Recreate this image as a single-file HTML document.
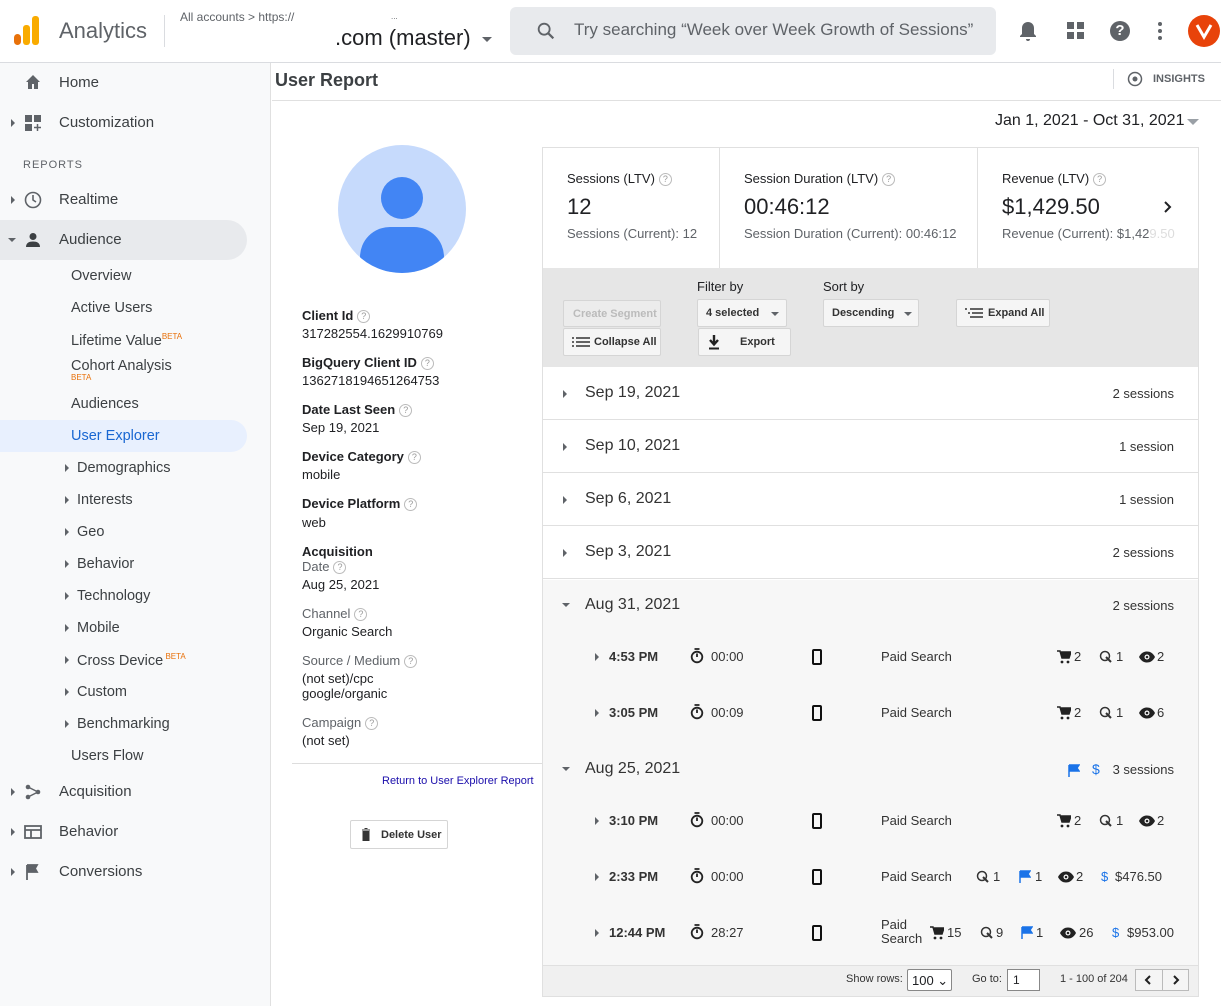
<!DOCTYPE html>
<html><head><meta charset="utf-8"><style>
*{box-sizing:border-box;margin:0;padding:0}
body{width:1221px;height:1006px;overflow:hidden;font-family:"Liberation Sans",Arial,sans-serif;color:#202124;background:#fff;position:relative}
.a{position:absolute;white-space:nowrap}
.nav{font-size:15px;color:#3c4043}
.sub{font-size:14.5px;color:#3c4043}
.tri{position:absolute;width:0;height:0;border-top:4px solid transparent;border-bottom:4px solid transparent;border-left:4px solid #5f6368}
.trid{position:absolute;width:0;height:0;border-left:4px solid transparent;border-right:4px solid transparent;border-top:4px solid #5f6368}
.lbl{font-size:13px;font-weight:bold;color:#202124}
.val{font-size:13px;color:#202124}
.gl{font-size:13px;color:#5f6368}
.q{display:inline-block;width:13px;height:13px;border:1px solid #bbb;border-radius:50%;font-size:9px;color:#999;text-align:center;line-height:11px;vertical-align:middle;margin-left:4px;font-weight:normal}
.btn{position:absolute;background:#f5f5f5;border:1px solid #d5d5d5;border-radius:2px;font-size:11px;font-weight:bold;color:#333}
.row{position:absolute;left:543px;width:655px;height:53px;border-bottom:1px solid #e0e0e0}
.row .d{position:absolute;left:42px;top:17px;font-size:16px;color:#333}
.row .s{position:absolute;right:24px;top:19px;font-size:13px;color:#333}
.sess{position:absolute;left:543px;width:655px;font-size:13px;color:#333}
.sess b{position:absolute;left:66px}
</style></head><body>
<!-- header -->
<div class="a" style="left:0;top:62px;width:1221px;border-top:1px solid #dadce0"></div>
<div class="a" style="left:14px;top:34px;width:7px;height:11px;background:#e8710a;border-radius:4px"></div>
<div class="a" style="left:23px;top:25px;width:7px;height:20px;background:#f9ab00;border-radius:3px"></div>
<div class="a" style="left:32px;top:16px;width:7px;height:29px;background:#f9ab00;border-radius:3px"></div>
<div class="a" style="left:59px;top:18px;font-size:22px;color:#5f6368">Analytics</div>
<div class="a" style="left:164px;top:15px;height:32px;border-left:1px solid #dadce0"></div>
<div class="a" style="left:180px;top:10px;font-size:12px;color:#5f6368">All accounts &gt; https://</div>
<div class="a" style="left:391px;top:12px;font-size:8px;color:#5f6368">...</div>
<div class="a" style="left:335px;top:25px;font-size:22px;color:#202124">.com (master)</div>
<div class="trid" style="left:482px;top:37px;border-width:5px 5px 0 5px"></div>
<div class="a" style="left:510px;top:7px;width:486px;height:48px;background:#e8eaed;border-radius:6px"></div>
<svg class="a" style="left:535px;top:20px" width="22" height="22" viewBox="0 0 24 24"><circle cx="10" cy="10" r="6" fill="none" stroke="#5f6368" stroke-width="2"/><path d="M14.5 14.5L20 20" stroke="#5f6368" stroke-width="2.4"/></svg>
<div class="a" style="left:574px;top:20px;font-size:17px;color:#5f6368">Try searching “Week over Week Growth of Sessions”</div>
<svg class="a" style="left:1018px;top:20px" width="20" height="22" viewBox="0 0 20 22"><path d="M10 2c-3.5 0-6 2.6-6 6v6l-2 2v1h16v-1l-2-2V8c0-3.4-2.5-6-6-6zM8 19h4a2 2 0 01-4 0z" fill="#5f6368"/></svg>
<svg class="a" style="left:1067px;top:22px" width="18" height="18"><rect x="0" y="0" width="7" height="7" fill="#5f6368"/><rect x="10" y="0" width="7" height="7" fill="#5f6368"/><rect x="0" y="10" width="7" height="7" fill="#5f6368"/><rect x="10" y="10" width="7" height="7" fill="#5f6368"/></svg>
<div class="a" style="left:1110px;top:21px;width:20px;height:20px;border-radius:50%;background:#5f6368;color:#fff;font-size:15px;font-weight:bold;text-align:center;line-height:20px">?</div>
<svg class="a" style="left:1157px;top:21px" width="6" height="20"><circle cx="3" cy="3" r="2" fill="#5f6368"/><circle cx="3" cy="10" r="2" fill="#5f6368"/><circle cx="3" cy="17" r="2" fill="#5f6368"/></svg>
<div class="a" style="left:1188px;top:15px;width:32px;height:32px;border-radius:50%;background:#e8430a"></div>
<svg class="a" style="left:1195px;top:22px" width="18" height="18"><path d="M2 3l7 12 7-12" stroke="#fff" stroke-width="3" fill="none"/></svg>
<!-- sidebar -->
<div class="a" style="left:0;top:63px;width:271px;height:943px;background:#f8f9fa;border-right:1px solid #e0e0e0"></div>
<svg class="a" style="left:25px;top:74px" width="16" height="16"><path d="M8 1L1 8h2v7h4v-5h2v5h4V8h2z" fill="#5f6368"/></svg>
<div class="a nav" style="left:59px;top:74px">Home</div>
<div class="tri" style="left:11px;top:119px"></div>
<svg class="a" style="left:25px;top:115px" width="16" height="16"><rect x="0" y="0" width="7" height="7" fill="#5f6368"/><rect x="9" y="0" width="7" height="7" fill="#5f6368"/><rect x="0" y="9" width="7" height="7" fill="#5f6368"/><path d="M12.5 9v7M9 12.5h7" stroke="#5f6368" stroke-width="1.5"/></svg>
<div class="a nav" style="left:59px;top:114px">Customization</div>
<div class="a" style="left:23px;top:159px;font-size:11px;letter-spacing:1px;color:#5f6368">REPORTS</div>
<div class="tri" style="left:11px;top:196px"></div>
<svg class="a" style="left:24px;top:191px" width="18" height="18"><circle cx="9" cy="9" r="7.5" fill="none" stroke="#5f6368" stroke-width="1.6"/><path d="M9 4v5l3 2" stroke="#5f6368" stroke-width="1.6" fill="none"/></svg>
<div class="a nav" style="left:59px;top:191px">Realtime</div>
<div class="a" style="left:0;top:220px;width:247px;height:40px;background:#e8eaed;border-radius:0 20px 20px 0"></div>
<div class="trid" style="left:8px;top:238px"></div>
<svg class="a" style="left:25px;top:232px" width="16" height="16"><circle cx="8" cy="4.5" r="3.5" fill="#3c4043"/><path d="M1 15c0-4 3-5.5 7-5.5s7 1.5 7 5.5z" fill="#3c4043"/></svg>
<div class="a nav" style="left:59px;top:231px">Audience</div>
<div class="a sub" style="left:71px;top:268px">Overview</div>
<div class="a sub" style="left:71px;top:300px">Active Users</div>
<div class="a sub" style="left:71px;top:332px">Lifetime Value<sup style="font-size:8px;color:#e8710a">BETA</sup></div>
<div class="a sub" style="left:71px;top:358px">Cohort Analysis</div>
<div class="a" style="left:71px;top:373px;font-size:8px;color:#e8710a">BETA</div>
<div class="a sub" style="left:71px;top:396px">Audiences</div>
<div class="a" style="left:0;top:420px;width:247px;height:32px;background:#e8f0fe;border-radius:0 16px 16px 0"></div>
<div class="a sub" style="left:71px;top:428px;color:#1967d2">User Explorer</div>
<div class="tri" style="left:65px;top:464px"></div><div class="a sub" style="left:77px;top:460px">Demographics</div>
<div class="tri" style="left:65px;top:496px"></div><div class="a sub" style="left:77px;top:492px">Interests</div>
<div class="tri" style="left:65px;top:528px"></div><div class="a sub" style="left:77px;top:524px">Geo</div>
<div class="tri" style="left:65px;top:560px"></div><div class="a sub" style="left:77px;top:556px">Behavior</div>
<div class="tri" style="left:65px;top:592px"></div><div class="a sub" style="left:77px;top:588px">Technology</div>
<div class="tri" style="left:65px;top:624px"></div><div class="a sub" style="left:77px;top:620px">Mobile</div>
<div class="tri" style="left:65px;top:656px"></div><div class="a sub" style="left:77px;top:652px">Cross Device<sup style="font-size:8px;color:#e8710a"> BETA</sup></div>
<div class="tri" style="left:65px;top:688px"></div><div class="a sub" style="left:77px;top:684px">Custom</div>
<div class="tri" style="left:65px;top:720px"></div><div class="a sub" style="left:77px;top:716px">Benchmarking</div>
<div class="a sub" style="left:71px;top:748px">Users Flow</div>
<div class="tri" style="left:11px;top:788px"></div>
<svg class="a" style="left:25px;top:784px" width="16" height="16"><circle cx="3" cy="3" r="2.3" fill="#5f6368"/><circle cx="3" cy="13" r="2.3" fill="#5f6368"/><circle cx="13" cy="8" r="2.3" fill="#5f6368"/><path d="M3 3l10 5M3 13l10-5" stroke="#5f6368" stroke-width="1.5"/></svg>
<div class="a nav" style="left:59px;top:783px">Acquisition</div>
<div class="tri" style="left:11px;top:828px"></div>
<svg class="a" style="left:24px;top:825px" width="18" height="14"><rect x="1" y="1" width="16" height="12" fill="none" stroke="#5f6368" stroke-width="1.8"/><path d="M1 5h16M7 5v8" stroke="#5f6368" stroke-width="1.8"/></svg>
<div class="a nav" style="left:59px;top:823px">Behavior</div>
<div class="tri" style="left:11px;top:868px"></div>
<svg class="a" style="left:26px;top:864px" width="14" height="16"><path d="M1 1v15M1 1h10l-2 3.5 2 3.5H1" fill="#5f6368" stroke="#5f6368" stroke-width="1.8"/></svg>
<div class="a nav" style="left:59px;top:863px">Conversions</div>
<!-- title bar -->
<div class="a" style="left:272px;top:100px;width:949px;border-top:1px solid #e0e0e0"></div>
<div class="a" style="left:275px;top:70px;font-size:18px;font-weight:bold;color:#3c4043">User Report</div>
<div class="a" style="left:1113px;top:69px;height:20px;border-left:1px solid #dadce0"></div>
<svg class="a" style="left:1127px;top:71px" width="16" height="16"><circle cx="8" cy="8" r="6.5" fill="none" stroke="#5f6368" stroke-width="1.5"/><circle cx="8" cy="8" r="2.5" fill="#5f6368"/></svg>
<div class="a" style="left:1153px;top:73px;font-size:11px;font-weight:bold;color:#5f6368">INSIGHTS</div>
<div class="a" style="left:995px;top:112px;font-size:16px;color:#202124">Jan 1, 2021 - Oct 31, 2021</div>
<div class="trid" style="left:1187px;top:119px;border-width:6px 6px 0 6px;border-top-color:#9aa0a6"></div>
<!-- avatar -->
<div class="a" style="left:338px;top:145px;width:128px;height:128px;border-radius:50%;background:#c6dafc;overflow:hidden">
<div class="a" style="left:43px;top:32px;width:42px;height:42px;border-radius:50%;background:#4285f4"></div>
<div class="a" style="left:22px;top:82px;width:84px;height:60px;border-radius:30px 30px 0 0;background:#4285f4"></div></div>
<div class="a lbl" style="left:302px;top:308px">Client Id<span class="q">?</span></div>
<div class="a val" style="left:302px;top:326px">317282554.1629910769</div>
<div class="a lbl" style="left:302px;top:355px">BigQuery Client ID<span class="q">?</span></div>
<div class="a val" style="left:302px;top:373px">1362718194651264753</div>
<div class="a lbl" style="left:302px;top:402px">Date Last Seen<span class="q">?</span></div>
<div class="a val" style="left:302px;top:420px">Sep 19, 2021</div>
<div class="a lbl" style="left:302px;top:449px">Device Category<span class="q">?</span></div>
<div class="a val" style="left:302px;top:467px">mobile</div>
<div class="a lbl" style="left:302px;top:496px">Device Platform<span class="q">?</span></div>
<div class="a val" style="left:302px;top:515px">web</div>
<div class="a lbl" style="left:302px;top:544px">Acquisition</div>
<div class="a gl" style="left:302px;top:559px">Date<span class="q">?</span></div>
<div class="a val" style="left:302px;top:577px">Aug 25, 2021</div>
<div class="a gl" style="left:302px;top:606px">Channel<span class="q">?</span></div>
<div class="a val" style="left:302px;top:624px">Organic Search</div>
<div class="a gl" style="left:302px;top:653px">Source / Medium<span class="q">?</span></div>
<div class="a val" style="left:302px;top:671px">(not set)/cpc</div>
<div class="a val" style="left:302px;top:686px">google/organic</div>
<div class="a gl" style="left:302px;top:715px">Campaign<span class="q">?</span></div>
<div class="a val" style="left:302px;top:733px">(not set)</div>
<div class="a" style="left:292px;top:763px;width:250px;border-top:1px solid #ddd"></div>
<div class="a" style="left:382px;top:775px;font-size:11px;color:#1a0dab">Return to User Explorer Report</div>
<div class="btn" style="left:350px;top:820px;width:98px;height:29px;background:#fff"><svg class="a" style="left:10px;top:7px" width="10" height="13"><path d="M1 2h8M3.5 0.5h3M2 3.5h6v9H2z" fill="#333" stroke="#333"/></svg><span class="a" style="left:30px;top:8px">Delete User</span></div>
<!-- right panel -->
<div class="a" style="left:542px;top:147px;width:657px;height:850px;border:1px solid #e0e0e0"></div>
<div class="a" style="left:719px;top:148px;height:120px;border-left:1px solid #e0e0e0"></div>
<div class="a" style="left:977px;top:148px;height:120px;border-left:1px solid #e0e0e0"></div>
<div class="a" style="left:567px;top:171px;font-size:13px">Sessions (LTV)<span class="q">?</span></div>
<div class="a" style="left:567px;top:194px;font-size:22px">12</div>
<div class="a gl" style="left:567px;top:226px">Sessions (Current): 12</div>
<div class="a" style="left:744px;top:171px;font-size:13px">Session Duration (LTV)<span class="q">?</span></div>
<div class="a" style="left:744px;top:194px;font-size:22px">00:46:12</div>
<div class="a gl" style="left:744px;top:226px">Session Duration (Current): 00:46:12</div>
<div class="a" style="left:1002px;top:171px;font-size:13px">Revenue (LTV)<span class="q">?</span></div>
<div class="a" style="left:1002px;top:194px;font-size:22px">$1,429.50</div>
<div class="a gl" style="left:1002px;top:226px">Revenue (Current): $1,42<span style="color:#ddd">9.50</span></div>
<svg class="a" style="left:1163px;top:200px" width="10" height="14"><path d="M2 2l5 5-5 5" stroke="#202124" stroke-width="2" fill="none"/></svg>
<!-- toolbar -->
<div class="a" style="left:543px;top:268px;width:655px;height:99px;background:#e6e6e6"></div>
<div class="a" style="left:697px;top:279px;font-size:13px">Filter by</div>
<div class="a" style="left:823px;top:279px;font-size:13px">Sort by</div>
<div class="btn" style="left:563px;top:300px;width:98px;height:27px;color:#bbb;background:#ececec"><span class="a" style="left:9px;top:7px">Create Segment</span></div>
<div class="btn" style="left:697px;top:299px;width:90px;height:28px"><span class="a" style="left:8px;top:7px">4 selected</span><div class="trid" style="left:73px;top:12px"></div></div>
<div class="btn" style="left:823px;top:299px;width:96px;height:28px"><span class="a" style="left:8px;top:7px">Descending</span><div class="trid" style="left:80px;top:12px"></div></div>
<div class="btn" style="left:956px;top:299px;width:94px;height:28px"><svg class="a" style="left:8px;top:8px" width="18" height="10"><path d="M0 1h2M5 1h13M3 5h2M7 5h11M5 9h13" stroke="#333" stroke-width="1.6"/></svg><span class="a" style="left:31px;top:7px">Expand All</span></div>
<div class="btn" style="left:563px;top:328px;width:98px;height:28px"><svg class="a" style="left:8px;top:8px" width="18" height="10"><path d="M0 1h2M4 1h14M0 5h2M4 5h14M0 9h2M4 9h14" stroke="#333" stroke-width="1.6"/></svg><span class="a" style="left:30px;top:7px">Collapse All</span></div>
<div class="btn" style="left:698px;top:328px;width:93px;height:28px"><svg class="a" style="left:9px;top:6px" width="12" height="15"><path d="M6 0v9M2 5l4 4.5L10 5" stroke="#222" stroke-width="2.4" fill="none"/><path d="M1 13.5h10" stroke="#222" stroke-width="2"/></svg><span class="a" style="left:41px;top:7px">Export</span></div>
<!-- rows -->
<div class="row" style="top:367px"><div class="tri" style="left:20px;top:23px"></div><span class="d">Sep 19, 2021</span><span class="s">2 sessions</span></div>
<div class="row" style="top:420px"><div class="tri" style="left:20px;top:23px"></div><span class="d">Sep 10, 2021</span><span class="s">1 session</span></div>
<div class="row" style="top:473px"><div class="tri" style="left:20px;top:23px"></div><span class="d">Sep 6, 2021</span><span class="s">1 session</span></div>
<div class="row" style="top:526px"><div class="tri" style="left:20px;top:23px"></div><span class="d">Sep 3, 2021</span><span class="s">2 sessions</span></div>
<div class="a" style="left:543px;top:580px;width:655px;height:385px;background:#f7f7f7"></div>
<div class="row" style="top:579px;border:none"><div class="trid" style="left:19px;top:24px"></div><span class="d">Aug 31, 2021</span><span class="s">2 sessions</span></div>
<div class="row" style="top:743px;border:none"><div class="trid" style="left:19px;top:24px"></div><span class="d">Aug 25, 2021</span><span class="s">3 sessions</span>
<svg class="a" style="left:525px;top:21px" width="12" height="13"><path d="M1 1v12M1 1h10l-2 3 2 3H1" fill="#1a73e8" stroke="#1a73e8" stroke-width="1.5"/></svg><span class="a" style="left:549px;top:18px;color:#1a73e8;font-size:14px">$</span></div>
<!-- sessions -->
<svg width="0" height="0" style="position:absolute"><defs>
<symbol id="tm" viewBox="0 0 14 16"><circle cx="7" cy="9" r="5.3" fill="none" stroke="#222" stroke-width="1.8"/><path d="M4.5 1h5M7 5.5v3.5" stroke="#222" stroke-width="1.8"/></symbol>
<symbol id="ph" viewBox="0 0 10 16"><rect x="1" y="1" width="8" height="14" rx="1" fill="none" stroke="#111" stroke-width="2"/></symbol>
<symbol id="cart" viewBox="0 0 14 14"><path d="M0 1h3l2 7h7l2-6H4" fill="#222" stroke="#222" stroke-width="1.5"/><circle cx="5" cy="12" r="1.4" fill="#222"/><circle cx="11" cy="12" r="1.4" fill="#222"/></symbol>
<symbol id="clk" viewBox="0 0 14 14"><circle cx="6" cy="6" r="4.5" fill="none" stroke="#333" stroke-width="1.5"/><path d="M7 7l5 5" stroke="#333" stroke-width="2"/></symbol>
<symbol id="eye" viewBox="0 0 16 12"><path d="M0 6c2-4 5-5.5 8-5.5S14 2 16 6c-2 4-5 5.5-8 5.5S2 10 0 6z" fill="#222"/><circle cx="8" cy="6" r="2.5" fill="#fff"/><circle cx="8" cy="6" r="1.3" fill="#222"/></symbol>
<symbol id="flag" viewBox="0 0 12 13"><path d="M1 1v12M1 1h10l-2 3 2 3H1" fill="#1a73e8" stroke="#1a73e8" stroke-width="1.5"/></symbol>
</defs></svg>
<div class="sess" style="top:649px"><div class="tri" style="left:52px;top:4px"></div><b>4:53 PM</b><svg class="a" style="left:147px;top:-1px" width="14" height="16"><use href="#tm"/></svg><span class="a" style="left:168px">00:00</span><svg class="a" style="left:269px;top:0" width="10" height="16"><use href="#ph"/></svg><span class="a" style="left:338px">Paid Search</span><svg class="a" style="left:514px;top:1px" width="14" height="14"><use href="#cart"/></svg><span class="a" style="left:531px">2</span><svg class="a" style="left:556px;top:1px" width="14" height="14"><use href="#clk"/></svg><span class="a" style="left:573px">1</span><svg class="a" style="left:596px;top:2px" width="16" height="12"><use href="#eye"/></svg><span class="a" style="left:614px">2</span></div>
<div class="sess" style="top:705px"><div class="tri" style="left:52px;top:4px"></div><b>3:05 PM</b><svg class="a" style="left:147px;top:-1px" width="14" height="16"><use href="#tm"/></svg><span class="a" style="left:168px">00:09</span><svg class="a" style="left:269px;top:0" width="10" height="16"><use href="#ph"/></svg><span class="a" style="left:338px">Paid Search</span><svg class="a" style="left:514px;top:1px" width="14" height="14"><use href="#cart"/></svg><span class="a" style="left:531px">2</span><svg class="a" style="left:556px;top:1px" width="14" height="14"><use href="#clk"/></svg><span class="a" style="left:573px">1</span><svg class="a" style="left:596px;top:2px" width="16" height="12"><use href="#eye"/></svg><span class="a" style="left:614px">6</span></div>
<div class="sess" style="top:813px"><div class="tri" style="left:52px;top:4px"></div><b>3:10 PM</b><svg class="a" style="left:147px;top:-1px" width="14" height="16"><use href="#tm"/></svg><span class="a" style="left:168px">00:00</span><svg class="a" style="left:269px;top:0" width="10" height="16"><use href="#ph"/></svg><span class="a" style="left:338px">Paid Search</span><svg class="a" style="left:514px;top:1px" width="14" height="14"><use href="#cart"/></svg><span class="a" style="left:531px">2</span><svg class="a" style="left:556px;top:1px" width="14" height="14"><use href="#clk"/></svg><span class="a" style="left:573px">1</span><svg class="a" style="left:596px;top:2px" width="16" height="12"><use href="#eye"/></svg><span class="a" style="left:614px">2</span></div>
<div class="sess" style="top:869px"><div class="tri" style="left:52px;top:4px"></div><b>2:33 PM</b><svg class="a" style="left:147px;top:-1px" width="14" height="16"><use href="#tm"/></svg><span class="a" style="left:168px">00:00</span><svg class="a" style="left:269px;top:0" width="10" height="16"><use href="#ph"/></svg><span class="a" style="left:338px">Paid Search</span><svg class="a" style="left:433px;top:1px" width="14" height="14"><use href="#clk"/></svg><span class="a" style="left:450px">1</span><svg class="a" style="left:476px;top:1px" width="12" height="13"><use href="#flag"/></svg><span class="a" style="left:492px">1</span><svg class="a" style="left:515px;top:2px" width="16" height="12"><use href="#eye"/></svg><span class="a" style="left:533px">2</span><span class="a" style="left:558px;color:#1a73e8">$</span><span class="a" style="left:572px">$476.50</span></div>
<div class="sess" style="top:925px"><div class="tri" style="left:52px;top:4px"></div><b>12:44 PM</b><svg class="a" style="left:147px;top:-1px" width="14" height="16"><use href="#tm"/></svg><span class="a" style="left:168px">28:27</span><svg class="a" style="left:269px;top:0" width="10" height="16"><use href="#ph"/></svg><span class="a" style="left:338px;top:-7px;line-height:14px">Paid<br>Search</span><svg class="a" style="left:387px;top:1px" width="14" height="14"><use href="#cart"/></svg><span class="a" style="left:404px">15</span><svg class="a" style="left:437px;top:1px" width="14" height="14"><use href="#clk"/></svg><span class="a" style="left:453px">9</span><svg class="a" style="left:478px;top:1px" width="12" height="13"><use href="#flag"/></svg><span class="a" style="left:493px">1</span><svg class="a" style="left:517px;top:2px" width="16" height="12"><use href="#eye"/></svg><span class="a" style="left:536px">26</span><span class="a" style="left:569px;color:#1a73e8">$</span><span class="a" style="left:584px">$953.00</span></div>
<!-- footer -->
<div class="a" style="left:543px;top:965px;width:655px;height:31px;background:#f0f0f0;border-top:1px solid #e0e0e0"></div>
<div class="a" style="left:846px;top:973px;font-size:11px;color:#333">Show rows:</div>
<div class="a" style="left:907px;top:969px;width:45px;height:22px;border:1px solid #888;border-radius:2px;background:#fff;font-size:13px;padding:3px 0 0 4px">100 ⌄</div>
<div class="a" style="left:972px;top:973px;font-size:11px;color:#333">Go to:</div>
<div class="a" style="left:1007px;top:969px;width:33px;height:22px;border:1px solid #888;background:#fff;font-size:12px;padding:3px 0 0 5px">1</div>
<div class="a" style="left:1060px;top:973px;font-size:11px;color:#333">1 - 100 of 204</div>
<div class="a" style="left:1135px;top:969px;width:54px;height:22px;border:1px solid #bbb;background:#f5f5f5"></div>
<div class="a" style="left:1162px;top:969px;height:22px;border-left:1px solid #bbb"></div>
<svg class="a" style="left:1144px;top:975px" width="8" height="10"><path d="M6 1L2 5l4 4" stroke="#222" stroke-width="2" fill="none"/></svg>
<svg class="a" style="left:1172px;top:975px" width="8" height="10"><path d="M2 1l4 4-4 4" stroke="#222" stroke-width="2" fill="none"/></svg>
</body></html>
